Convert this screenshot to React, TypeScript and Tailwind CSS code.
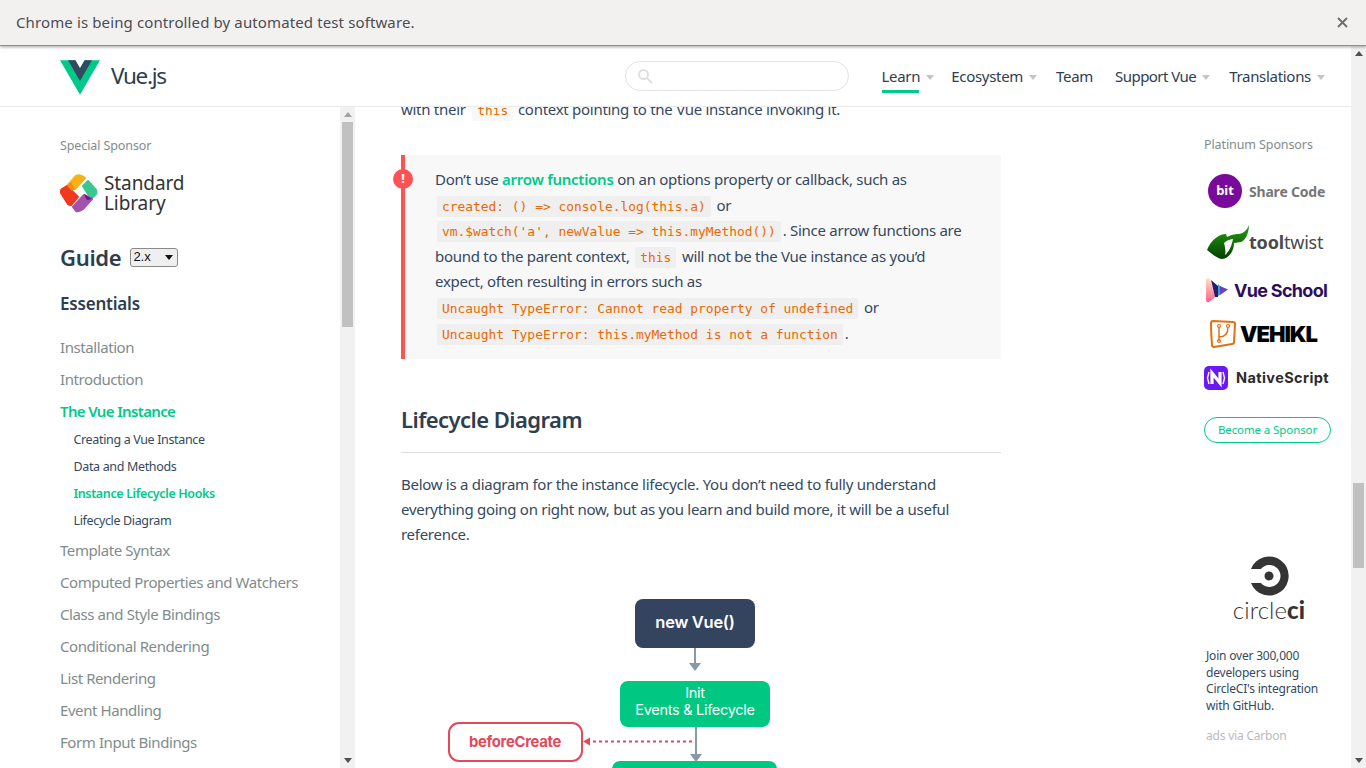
import React from 'react';

const sans = { fontFamily: '"Noto Sans", sans-serif' };

const Caret = () => (
    <svg width="8" height="5" viewBox="0 0 8 5" className="ml-[6px] mt-[2px]">
        <path d="M0 0h8L4 5z" fill="#c4c4c4" />
    </svg>
);

const Code = ({ children, className = '' }: { children: React.ReactNode; className?: string }) => (
    <code className={`mx-[2px] rounded-[2px] bg-[#efefef] px-[5px] py-[3px] font-['DejaVu_Sans_Mono',monospace] text-[12.9px] leading-none tracking-normal text-[#e96900] ${className}`}>
        {children}
    </code>
);

const VueLogo = () => (
    <svg width="40" height="35" viewBox="0 0 261.76 226.69">
        <path d="M161.096.001l-30.225 52.351L100.647.001H-.005l130.877 226.688L261.749.001z" fill="#00c98a" />
        <path d="M161.096.001l-30.225 52.351L100.647.001H52.346l78.526 136.01L209.398.001z" fill="#34495e" />
    </svg>
);

const StdLibLogo = () => (
    <svg width="38" height="40" viewBox="0 0 38 40" strokeLinejoin="round" strokeWidth="2">
        <path d="M7 13 L16 3 Q20 1 25 5 L15 16 Z" fill="#fbb116" stroke="#fbb116" />
        <path d="M1 20 Q0 18 2 16 L7 13 L18 24 L11 32 Q9 32 8 31 Z" fill="#f1391f" stroke="#f1391f" />
        <path d="M7 13 L11 9 L15 16 L12 18 Z" fill="#f58a1f" />
        <path d="M23 13 L28 8 L36 17 Q37 19 36 21 L31 26 Z" fill="#39c78e" stroke="#39c78e" />
        <path d="M13 34 L24 22 L32 26 L23 36 Q19 39 16 38 Z" fill="#a352ac" stroke="#a352ac" />
        <path d="M24 21 L32 26 L27 27 Z" fill="#6d0f9c" />
    </svg>
);

const ToolTwistLogo = () => (
    <svg width="42" height="35" viewBox="0 0 42 35">
        <defs>
            <linearGradient id="tt" x1="0" y1="0" x2="0" y2="1">
                <stop offset="0" stopColor="#25a010" />
                <stop offset="1" stopColor="#063f00" />
            </linearGradient>
        </defs>
        <path
            d="M0 25 C4 15 12 9 19 9 L20 12 C26 9 29 9 32 9 C37 8 40 5 42 0 C42 8 38 16 34 17 L27 18 C27 26 22 34 14 34 C8 32 4 28 0 25 Z M17 18 C20 15 24 14 26 14 C25 20 22 27 18 30 C19 26 18 22 17 18 Z"
            fill="url(#tt)"
            fillRule="evenodd"
        />
    </svg>
);

const VueSchoolLogo = () => (
    <svg width="24" height="26" viewBox="0 0 24 26">
        <defs>
            <linearGradient id="vs" x1="0" y1="0" x2="0" y2="1">
                <stop offset="0" stopColor="#ffe2c0" />
                <stop offset="1" stopColor="#ff5f90" />
            </linearGradient>
        </defs>
        <path d="M1 3 Q1 0 5 2 L10 19 Q10 21 8 22 L4 25 Q1 26 1 23 Z" fill="url(#vs)" />
        <path d="M6 3 L13 9 L13 20 L10 20 Z" fill="#2a1a6b" />
        <path d="M13 7 L16 10 L15 18 L13 19 Z" fill="#2aa8c0" />
        <path d="M15 9 L23 12.500 L15 18 Z" fill="#6a3fd0" />
    </svg>
);

const VehiklLogo = () => (
    <svg width="26" height="28" viewBox="0 0 26 28" fill="none" stroke="#e5700f" strokeWidth="2">
        <path d="M3 1 L23 2 Q25 2 25 4 L24 22 Q24 24 22 24 L4 27 Q2 27 2 25 Q1 13 1 3 Q1 1 3 1Z" />
        <path d="M9 7v14M9 17c6 0 9-3 9-10" strokeWidth="1.500" />
        <circle cx="9" cy="6" r="1.500" strokeWidth="1.200" />
        <circle cx="18" cy="6" r="1.500" strokeWidth="1.200" />
        <circle cx="9" cy="21" r="1.500" strokeWidth="1.200" />
    </svg>
);

const NativeScriptLogo = () => (
    <svg width="24" height="24" viewBox="0 0 24 24">
        <rect width="24" height="24" rx="5" fill="#6a18f5" />
        <path d="M8 18V7l8 10V6" fill="none" stroke="#fff" strokeWidth="3.200" />
        <path d="M5 6L3.500 12 5 18M19 6l1.500 6L19 18" fill="none" stroke="#fff" strokeWidth="1.400" />
    </svg>
);

const SideItem = ({ children }: { children: React.ReactNode }) => (
    <li className="h-[32px] text-[15px] leading-[32px] tracking-[-0.42px] text-[#7f8c8d]">{children}</li>
);

const SubItem = ({ children, active }: { children: React.ReactNode; active?: boolean }) => (
    <li className={`h-[27px] pl-[13.500px] text-[12.5px] leading-[27px] ${active ? 'font-semibold tracking-[-0.37px] text-[#00c98a]' : 'tracking-[-0.35px] text-[#34495e]'}`}>
        {children}
    </li>
);

const ScrollButton = ({ up, color }: { up?: boolean; color: string }) => (
    <div className="flex h-[15px] items-center justify-center">
        <svg width="8" height="5" viewBox="0 0 8 5">
            <path d={up ? 'M0 5h8L4 0z' : 'M0 0h8L4 5z'} fill={color} />
        </svg>
    </div>
);

const Diagram = () => (
    <svg width="600" height="190" viewBox="0 0 600 190" className="mt-[43px] block" style={{ fontFamily: 'Inter, sans-serif' }}>
        <path d="M294 50v24" stroke="#8798a8" strokeWidth="2" />
        <path d="M288 73h12l-6 8z" fill="#8798a8" />
        <path d="M295 136v29" stroke="#8798a8" strokeWidth="2" />
        <path d="M289 164h12l-6 8z" fill="#8798a8" />
        <path d="M186 151.500h108" stroke="#e2495a" strokeWidth="2" strokeDasharray="3 3" />
        <path d="M182 151.500l7-4v8z" fill="#e2495a" />
        <rect x="234" y="9" width="120" height="49" rx="8" fill="#34435e" />
        <text x="294" y="38" textAnchor="middle" fontSize="16.500" fontWeight="600" fill="#fff">new Vue()</text>
        <rect x="219" y="91" width="150" height="46" rx="8" fill="#00c882" />
        <text x="294" y="108" textAnchor="middle" fontSize="14.500" fill="#fff">Init</text>
        <text x="294" y="125" textAnchor="middle" fontSize="14.500" fill="#fff">Events &amp; Lifecycle</text>
        <rect x="48" y="133" width="133" height="38" rx="10" fill="#fff" stroke="#e2495a" strokeWidth="2" />
        <text x="114" y="157" textAnchor="middle" fontSize="14.800" fontWeight="700" fill="#e2495a">beforeCreate</text>
        <rect x="211" y="171" width="165" height="40" rx="8" fill="#00c882" />
    </svg>
);

export default function App() {
    return (
        <div className="flex h-[768px] w-[1366px] flex-col overflow-hidden bg-white text-[#34495e]" style={sans}>
            <div className="relative z-10 flex h-[46px] shrink-0 items-center justify-between border-b border-[#8f8f8d] bg-[#f2f1ef] pl-[16px] pr-[18px] shadow-[0_1px_3px_rgba(0,0,0,0.35)]">
                <span className="text-[15px] tracking-[0.12px] text-[#4c4c56]">Chrome is being controlled by automated test software.</span>
                <svg width="11" height="11" viewBox="0 0 11 11">
                    <path d="M1 1l9 9M10 1l-9 9" stroke="#6d6d6d" strokeWidth="1.800" />
                </svg>
            </div>

            <div className="flex min-h-0 flex-1">
                <div className="flex min-w-0 flex-1 flex-col">
                    <header className="relative z-[5] flex h-[61px] shrink-0 items-center border-b border-[#e8eaec] bg-white pl-[60px] pr-[26px]">
                        <div className="mt-[2px]"><VueLogo /></div>
                        <span className="ml-[11px] text-[22.5px] tracking-[-1.3px] text-[#2c3e50]">Vue.js</span>
                        <div className="ml-auto flex h-[30px] w-[224px] items-center rounded-full border border-[#e3e3e3] pl-[11px]">
                            <svg width="16" height="16" viewBox="0 0 16 16" fill="none" stroke="#e0e0e0" strokeWidth="2">
                                <circle cx="6.500" cy="6.500" r="4.500" />
                                <path d="M10 10l5 5" />
                            </svg>
                        </div>
                        <nav className="ml-[33px] flex items-center text-[15px] tracking-[-0.3px] text-[#2c3e50]">
                            <div className="relative flex items-center">
                                <span>Learn</span>
                                <Caret />
                                <div className="absolute left-0 top-[25px] h-[3px] w-[37px] bg-[#00c98a]" />
                            </div>
                            <div className="ml-[17px] flex items-center"><span>Ecosystem</span><Caret /></div>
                            <span className="ml-[19px]">Team</span>
                            <div className="ml-[22px] flex items-center"><span className="tracking-[-0.55px]">Support Vue</span><Caret /></div>
                            <div className="ml-[19px] flex items-center"><span>Translations</span><Caret /></div>
                        </nav>
                    </header>

                    <div className="flex min-h-0 flex-1">
                        <aside className="flex w-[355px] shrink-0">
                            <div className="w-[340px] pl-[60px] pt-[30px]">
                                <p className="text-[12.5px] leading-[17px] tracking-[-0.1px] text-[#7f8c8d]">Special Sponsor</p>
                                <div className="mt-[18px] flex h-[42px] items-center">
                                    <StdLibLogo />
                                    <div className="ml-[6px] text-[19px] leading-[20px] tracking-[-0.1px] text-[#333]">
                                        <div>Standard</div>
                                        <div>Library</div>
                                    </div>
                                </div>
                                <div className="mt-[27px] flex h-[32px] items-center">
                                    <h2 className="text-[22px] font-semibold tracking-[-0.3px] text-[#2c3e50]">Guide</h2>
                                    <div className="ml-[9px] flex h-[19px] w-[48px] items-center justify-between rounded-[3px] border border-[#8a8a8a] bg-[#efefef] pl-[2px] pr-[4px] text-[13px] text-[#111]" style={{ fontFamily: '"Liberation Sans", sans-serif' }}>
                                        <span>2.x</span>
                                        <svg width="8" height="5" viewBox="0 0 8 5"><path d="M0 0h8L4 5z" fill="#111" /></svg>
                                    </div>
                                </div>
                                <h3 className="mt-[19px] text-[17px] font-semibold leading-[24px] tracking-[-0.2px] text-[#2c3e50]">Essentials</h3>
                                <ul className="mt-[15px]">
                                    <SideItem>Installation</SideItem>
                                    <SideItem>Introduction</SideItem>
                                    <li className="h-[32px] text-[15px] font-semibold leading-[32px] tracking-[-0.65px] text-[#00c98a]">The Vue Instance</li>
                                    <ul className="mt-[-1px]">
                                        <SubItem>Creating a Vue Instance</SubItem>
                                        <SubItem>Data and Methods</SubItem>
                                        <SubItem active>Instance Lifecycle Hooks</SubItem>
                                        <SubItem>Lifecycle Diagram</SubItem>
                                    </ul>
                                    <SideItem>Template Syntax</SideItem>
                                    <SideItem>Computed Properties and Watchers</SideItem>
                                    <SideItem>Class and Style Bindings</SideItem>
                                    <SideItem>Conditional Rendering</SideItem>
                                    <SideItem>List Rendering</SideItem>
                                    <SideItem>Event Handling</SideItem>
                                    <SideItem>Form Input Bindings</SideItem>
                                </ul>
                            </div>
                            <div className="flex w-[15px] flex-col bg-[#f1f1f1]">
                                <ScrollButton up color="#a3a3a3" />
                                <div className="mx-auto h-[205px] w-[11px] bg-[#c1c1c1]" />
                                <div className="mt-auto"><ScrollButton color="#505050" /></div>
                            </div>
                        </aside>

                        <main className="ml-[46px] w-[600px] shrink-0 text-[15px] tracking-[-0.28px]">
                            <p className="mt-[-10px] h-[25px] leading-[25px]">
                                with their <Code className="ml-[3px] mr-[1px] bg-[#f8f8f8]">this</Code> context pointing to the Vue instance invoking it.
                            </p>
                            <div className="relative mt-[33px] h-[204px] border-l-4 border-[#ff5252] bg-[#f8f8f8] pl-[30px] pt-[12px] leading-[25.600px]">
                                <div className="absolute left-[-12px] top-[14px] flex h-[20px] w-[20px] items-center justify-center rounded-full bg-[#ff5252] text-[13px] font-bold text-white">!</div>
                                <div>Don’t use <b className="font-semibold text-[#00c98a]">arrow functions</b> on an options property or callback, such as</div>
                                <div><Code>created: () =&gt; console.log(this.a)</Code> or</div>
                                <div><Code>vm.$watch('a', newValue =&gt; this.myMethod())</Code>. Since arrow functions are</div>
                                <div>bound to the parent context, <Code>this</Code> will not be the Vue instance as you’d</div>
                                <div>expect, often resulting in errors such as</div>
                                <div><Code>Uncaught TypeError: Cannot read property of undefined</Code> or</div>
                                <div><Code>Uncaught TypeError: this.myMethod is not a function</Code>.</div>
                            </div>
                            <h2 className="mt-[43px] border-b border-[#dddddd] pb-[16px] text-[22px] font-semibold leading-[34px] tracking-[-0.55px] text-[#2c3e50]">Lifecycle Diagram</h2>
                            <div className="mt-[19px] leading-[25px]">
                                <div>Below is a diagram for the instance lifecycle. You don’t need to fully understand</div>
                                <div>everything going on right now, but as you learn and build more, it will be a useful</div>
                                <div>reference.</div>
                            </div>
                            <Diagram />
                        </main>

                        <aside className="ml-[203px] flex-1 pt-[29px]">
                            <p className="text-[12.5px] leading-[17px] tracking-[-0.1px] text-[#7f8c8d]">Platinum Sponsors</p>
                            <div className="mt-[21px] flex h-[34px] items-center pl-[4px]">
                                <div className="flex h-[34px] w-[34px] items-center justify-center rounded-full bg-[#7a0a9a] text-[13px] font-bold text-white">bit</div>
                                <span className="ml-[7px] text-[14px] font-bold tracking-[-0.2px] text-[#777]">Share Code</span>
                            </div>
                            <div className="mt-[15px] flex h-[38px] items-center pl-[3px]">
                                <ToolTwistLogo />
                                <span className="text-[18px] font-bold tracking-[-0.2px] text-[#4a4a4a]">tool<span className="font-normal">twist</span></span>
                            </div>
                            <div className="mt-[16px] flex h-[26px] items-center pl-[1px]">
                                <VueSchoolLogo />
                                <span className="ml-[5px] text-[18px] font-bold tracking-[-0.7px] text-[#2b0f5c]" style={{ fontFamily: 'Inter, sans-serif' }}>Vue School</span>
                            </div>
                            <div className="mt-[17px] flex h-[28px] items-center pl-[6px]">
                                <VehiklLogo />
                                <span className="ml-[4px] text-[22px] font-black tracking-[-1px] text-black" style={{ fontFamily: 'Inter, sans-serif' }}>VEHIKL</span>
                            </div>
                            <div className="mt-[18px] flex h-[24px] items-center">
                                <NativeScriptLogo />
                                <span className="ml-[8px] text-[14.500px] font-bold tracking-[0.4px] text-[#2b2b2b]" style={{ fontFamily: 'Inter, sans-serif' }}>NativeScript</span>
                            </div>
                            <div className="mt-[27px] flex h-[26px] w-[127px] items-center justify-center rounded-full border border-[#00c98a] text-[11.5px] tracking-[-0.1px] text-[#00c98a]">Become a Sponsor</div>

                            <div className="mt-[113px] flex w-[130px] flex-col items-center">
                                <svg width="40" height="40" viewBox="0 0 40 40">
                                    <path d="M2 13 A19.500 19.500 0 1 1 2 27 H12 A11 11 0 1 0 12 13 Z" fill="#343434" />
                                    <circle cx="20" cy="20" r="4.500" fill="#343434" />
                                </svg>
                                <span className="mt-[1px] text-[24px] font-light leading-[26px] tracking-[0.1px] text-[#343434]" style={{ fontFamily: '"Lato", sans-serif' }}>circle<b className="font-black">ci</b></span>
                            </div>
                            <div className="ml-[2px] mt-[25px] text-[12px] leading-[16.700px] tracking-[-0.2px] text-[#34495e]">
                                <div>Join over 300,000</div>
                                <div>developers using</div>
                                <div>CircleCI's integration</div>
                                <div>with GitHub.</div>
                            </div>
                            <p className="ml-[2px] mt-[13px] text-[12px] leading-[16px] tracking-[-0.2px] text-[#bbbbbb]">ads via Carbon</p>
                        </aside>
                    </div>
                </div>

                <div className="relative z-[6] flex w-[15px] shrink-0 flex-col bg-[#f1f1f1]">
                    <ScrollButton up color="#505050" />
                    <div className="mx-auto mt-[422px] h-[85px] w-[11px] bg-[#c1c1c1]" />
                    <div className="mt-auto"><ScrollButton color="#505050" /></div>
                </div>
            </div>
        </div>
    );
}
